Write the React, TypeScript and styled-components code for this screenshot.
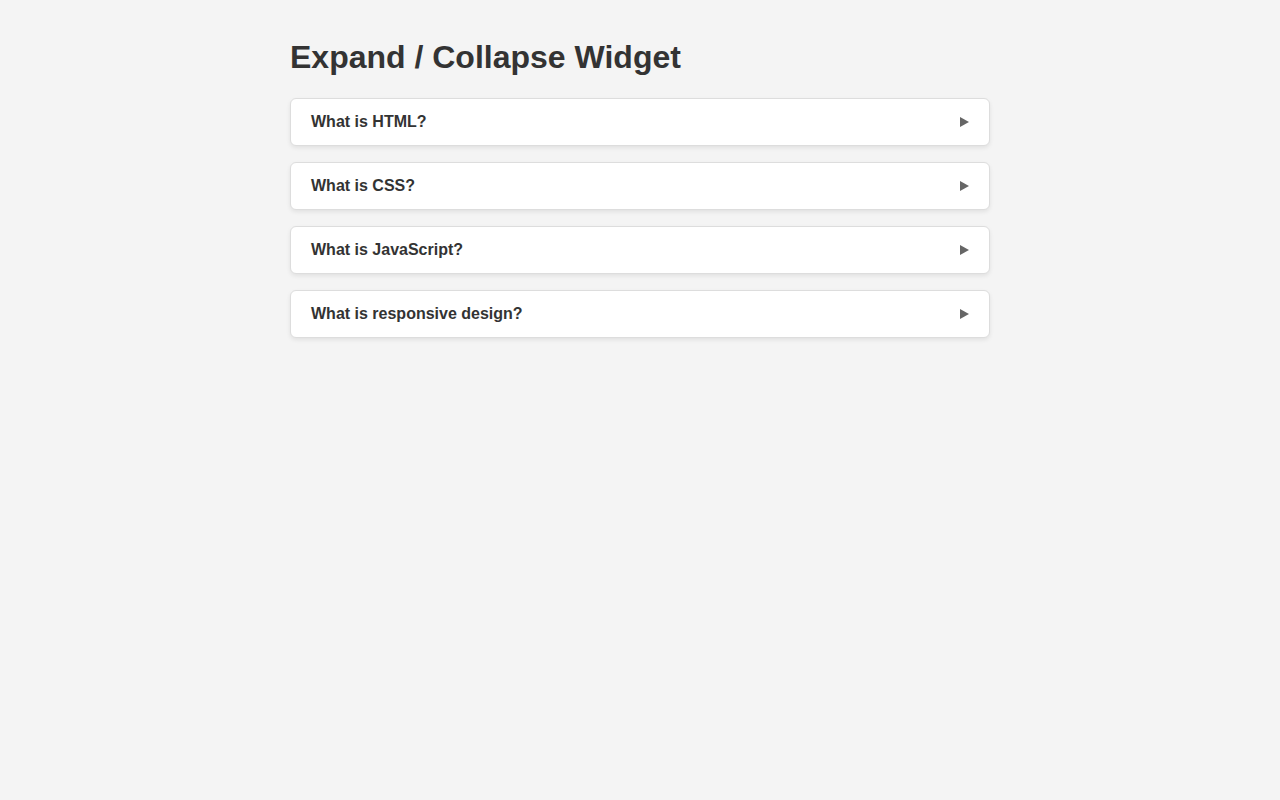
import React, { useState } from 'react'
import styled, { createGlobalStyle } from 'styled-components'

const GlobalStyle = createGlobalStyle`
  html, body {
    margin: 0;
    padding: 0;
    background: #f4f4f4;
    font-family: "Liberation Sans", Arial, sans-serif;
    color: #333;
  }
`

const items = [
  {
    q: 'What is HTML?',
    a: 'HTML is the standard markup language used to structure content on the web.',
  },
  {
    q: 'What is CSS?',
    a: 'CSS describes how HTML elements are displayed: layout, colours and fonts.',
  },
  {
    q: 'What is JavaScript?',
    a: 'JavaScript is the programming language that makes web pages interactive.',
  },
  {
    q: 'What is responsive design?',
    a: 'Responsive design makes a page adapt its layout to any screen size.',
  },
]

const App: React.FC = () => {
  const [open, setOpen] = useState<number | null>(null)

  const handleToggle = (index: number) => {
    setOpen(prev => (prev === index ? null : index))
  }

  return (
    <Wrapper>
      <GlobalStyle />
      <Title>Expand / Collapse Widget</Title>
      <List>
        {items.map((item, i) => (
          <Item key={item.q}>
            <Header onClick={() => handleToggle(i)}>
              <Question>{item.q}</Question>
              <Arrow open={open === i} />
            </Header>
            {open === i && <Answer>{item.a}</Answer>}
          </Item>
        ))}
      </List>
    </Wrapper>
  )
}

const Arrow: React.FC<{ open: boolean }> = ({ open }) => (
  <ArrowIcon viewBox="0 0 9 10" width={9} height={10} $open={open}>
    <polygon points="0,0 9,5 0,10" fill="#666" />
  </ArrowIcon>
)

export default App

const Wrapper = styled.div`
  width: 700px;
  margin: 0 auto;
  padding: 39px 0 40px;
`

const Title = styled.h1`
  margin: 0 0 22px;
  font-size: 32px;
  font-weight: bold;
  color: #333;
`

const List = styled.div`
  display: flex;
  flex-direction: column;
  gap: 16px;
`

const Item = styled.div`
  background: #fff;
  border: 1px solid #ddd;
  border-radius: 6px;
  box-shadow: 0 2px 4px rgba(0, 0, 0, 0.08);
  overflow: hidden;
`

const Header = styled.div`
  display: flex;
  align-items: center;
  justify-content: space-between;
  height: 46px;
  padding: 0 20px;
  cursor: pointer;
  user-select: none;
`

const Question = styled.span`
  font-size: 16px;
  font-weight: bold;
  color: #333;
`

const ArrowIcon = styled.svg<{ $open: boolean }>`
  display: block;
  transition: transform 0.2s;
  transform: rotate(${p => (p.$open ? 90 : 0)}deg);
`

const Answer = styled.div`
  padding: 0 20px 16px;
  font-size: 15px;
  line-height: 1.5;
  color: #555;
`
